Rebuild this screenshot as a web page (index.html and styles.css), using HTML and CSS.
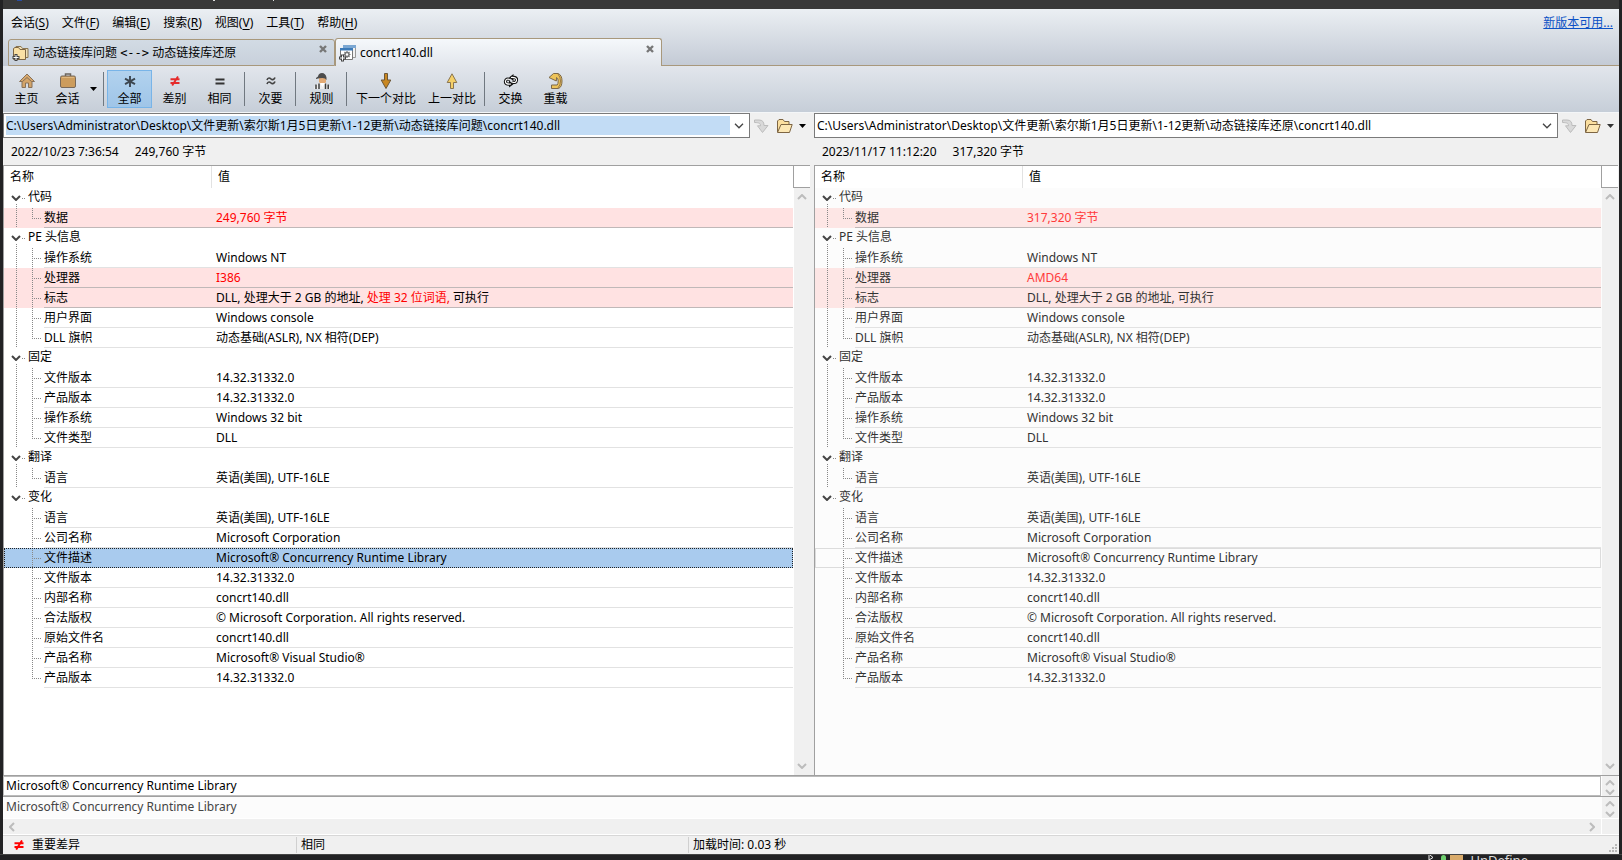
FILE: index.html
```html
<!DOCTYPE html>
<html lang="zh-CN">
<head>
<meta charset="utf-8">
<title>concrt140.dll</title>
<link rel="stylesheet" href="styles.css">
</head>
<body>
<svg class="defs" aria-hidden="true">
  <symbol id="chev" viewBox="0 0 10 6"><path d="M1 1l4 4 4-4" fill="none" stroke="currentColor" stroke-width="2"/></symbol>
  <symbol id="thin" viewBox="0 0 10 6"><path d="M1 .8l4 4 4-4" fill="none" stroke="currentColor" stroke-width="1.3"/></symbol>
  <symbol id="caret" viewBox="0 0 7 4"><path d="M0 0h7L3.500 4z" fill="currentColor"/></symbol>
  <symbol id="close" viewBox="0 0 8 8"><path d="M1 1l6 6M7 1L1 7" stroke="currentColor" stroke-width="2.400"/></symbol>
  <symbol id="noteq" viewBox="0 0 10 10"><path d="M.5 3.200h9M.5 7h9M8 .4L2.200 9.600" stroke="currentColor" stroke-width="1.900" fill="none"/></symbol>
  <symbol id="copy" viewBox="0 0 16 16"><path d="M1.500 2h4.500c3.500 0 5 2 5 5.500h4L9.500 14.500 4.500 7.800h3C7.500 5.500 6.500 4.600 1.500 4.500z" fill="#d9d9d9" stroke="#bcbcbc"/></symbol>
  <symbol id="open" viewBox="0 0 17 16"><path d="M1.500 14V3L3 1.500h4l1.500 2H13v3" fill="#fbdf9f" stroke="#7d6543"/><path d="M1.500 14.500L5 6.500h11.200l-2.700 8z" fill="#fce7b4" stroke="#7d6543"/></symbol>
</svg>

<div class="desktop">
  <div class="titlebar"><i class="frag blue"></i><i class="frag y"></i><i class="frag p"></i></div>
  <div class="window">
    <header class="top">
      <nav class="menu">
        <button>会话(<u>S</u>)</button><button>文件(<u>F</u>)</button><button>编辑(<u>E</u>)</button><button>搜索(<u>R</u>)</button><button>视图(<u>V</u>)</button><button>工具(<u>T</u>)</button><button>帮助(<u>H</u>)</button>
        <a class="update" href="#">新版本可用...</a>
      </nav>
      <div class="tabs" role="tablist">
        <div class="tab">
          <svg width="17" height="17" viewBox="0 0 17 17"><path d="M4 3V1.500h5l1.500 2H16v9h-3" fill="#eee0b8" stroke="#8a7550"/><path d="M1.500 14.500v-11L3 2.500h3.500l1.500 2h5.500v10z" fill="#fae0a4" stroke="#7d6543"/><path d="M4 9v7M.5 12.500h7" stroke="#444" stroke-width="3"/><path d="M4 10v5M1.500 12.500h5" stroke="#fff"/></svg>
          <button role="tab">动态链接库问题 <span class="arrow">&lt;--&gt;</span> 动态链接库还原</button>
          <button class="x" aria-label="关闭"><svg width="8" height="8"><use href="#close"/></svg></button>
        </div>
        <div class="tab active">
          <svg width="17" height="17" viewBox="0 0 17 17"><path d="M4.500.5h12v12h-12z" fill="#f2f2f2" stroke="#999"/><path d="M4 0h13v3H4z" fill="#7ba7d2"/><path d="M1.500 3.500h12v11h-12z" fill="#fff" stroke="#777"/><path d="M1 3h13v2.500H1z" fill="#3d7bb8"/><circle cx="8" cy="9.500" r="2" fill="none" stroke="#777" stroke-width="1.500"/><path d="M8 6v1.500M8 11.500V13M4.500 9.500H6M10 9.500h1.500M5.500 7l1 1M9.500 11l1 1M10.500 7l-1 1" stroke="#777" stroke-width="1.200"/><path d="M3.500 9.500v7M0 13h7" stroke="#444" stroke-width="3"/><path d="M3.500 10.500v5M1 13h5" stroke="#fff"/></svg>
          <button role="tab" aria-selected="true">concrt140.dll</button>
          <button class="x" aria-label="关闭"><svg width="8" height="8"><use href="#close"/></svg></button>
        </div>
        <div class="tabfill"></div>
      </div>
    </header>

    <div class="toolbar">
      <button class="tool"><svg width="16" height="16" viewBox="0 0 16 16"><path d="M3 8l5-5 5 5v6.500H9.500V10h-3v4.500H3z" fill="#d3a469" stroke="#877159"/><path d="M.5 8.500L8 1l7.500 7.500h-3L8 4.500 3.500 8.500z" fill="#d6a76c" stroke="#877159"/></svg>主页</button>
      <button class="tool narrow"><svg width="16" height="16" viewBox="0 0 16 16"><path d="M5.500 3V1h5v2" fill="none" stroke="#6c665e" stroke-width="1.500"/><rect x=".5" y="3" width="15" height="11.500" rx="1.500" fill="#cc9c5c" stroke="#77695a"/><path d="M2 4.500h12" stroke="#e0b87f"/></svg>会话</button>
      <button class="drop" aria-label="会话菜单"><svg width="7" height="4"><use href="#caret"/></svg></button>
      <span class="sep"></span>
      <button class="tool on"><svg width="16" height="16" viewBox="0 0 16 16"><path d="M8 3v11M3 5.700l10 5.500M13 5.700l-10 5.500" stroke="#3c4650" stroke-width="1.900"/></svg>全部</button>
      <button class="tool"><svg class="red" width="10" height="16"><use href="#noteq"/></svg>差别</button>
      <button class="tool"><svg width="16" height="16" viewBox="0 0 16 16"><path d="M3.500 6.500h9M3.500 10.500h9" stroke="#333" stroke-width="2"/></svg>相同</button>
      <span class="sep"></span>
      <button class="tool"><svg width="16" height="16" viewBox="0 0 16 16"><path d="M4 7c1-3 3-2 4-1s3 1 4-1.500M4 11c1-3 3-2 4-1s3 1 4-1.500" stroke="#444" stroke-width="1.700" fill="none"/></svg>次要</button>
      <span class="sep"></span>
      <button class="tool"><svg width="16" height="16" viewBox="0 0 16 16"><path d="M5 4h7v4.500Q11.500 11 8.500 11T5 8.500z" fill="#e3aa74"/><path d="M2 5q1-1 2-1.500Q4.500 0 8 0t4.500 4.500V7q-1-2-4-2T2 6z" fill="#4c4c4c"/><path d="M0 16q0-5 4.500-5.500h7Q16 11 16 16z" fill="#eee"/><path d="M2 11.500V16M5 10.500V16M11.500 10.500V16M14.200 11.500V16" stroke="#3c3c3c" stroke-width="1.500"/><path d="M6 10l2.500 4L11 10z" fill="#fff"/></svg>规则</button>
      <span class="sep"></span>
      <button class="tool w5"><svg width="16" height="16" viewBox="0 0 16 16"><path d="M6.500.5h3V7h3.300L8 15.500 3.200 7h3.300z" fill="#c98720" stroke="#6c5637"/></svg>下一个对比</button>
      <button class="tool w4"><svg width="16" height="16" viewBox="0 0 16 16"><path d="M6.500 15.500h3V9.500h3.300L8 .8 3.200 9.500h3.300z" fill="#f4cf68" stroke="#8a7550"/></svg>上一对比</button>
      <span class="sep"></span>
      <button class="tool"><svg width="16" height="16" viewBox="0 0 16 16"><g fill="none" stroke="#111" stroke-width="3.200"><path d="M7 6.500Q3 5 2.500 8.300T7 11"/><path d="M9 9Q13 10.500 13.500 7.300T10 4.500"/></g><path d="M6 7.500l4.500 3.700L6 14.500zM10.500 1L6 4.500 10.500 8z" fill="#111"/><g fill="none" stroke="#fff" stroke-width="1.200"><path d="M7 6.500Q3 5 2.500 8.300T8 11"/><path d="M9 9Q13 10.500 13.500 7.300T8 4.500"/></g></svg>交换</button>
      <button class="tool"><svg width="16" height="16" viewBox="0 0 16 16"><path d="M5.500.5H10q4 1.500 4 7.500t-3.500 7.500h-7v-3.500h5.700q1-1 1-4T8.500 4.500L8.300 8 1 4.500z" fill="#edc35a" stroke="#7d6848"/><path d="M10 1q2.500 3 2.500 7T10 15" fill="none" stroke="#9a7a45"/></svg>重载</button>
    </div>

    <main class="compare">
      <section class="side left">
        <div class="pathrow">
          <div class="combo"><input aria-label="左侧路径" value="C:\Users\Administrator\Desktop\文件更新\索尔斯1月5日更新\1-12更新\动态链接库问题\concrt140.dll"><button aria-label="历史"><svg width="10" height="6"><use href="#thin"/></svg></button></div>
          <button class="ib" aria-label="复制"><svg width="16" height="16"><use href="#copy"/></svg></button>
          <button class="ib" aria-label="打开"><svg width="17" height="16"><use href="#open"/></svg></button>
          <button class="ib" aria-label="打开菜单"><svg width="7" height="4"><use href="#caret"/></svg></button>
        </div>
        <div class="info"><span>2022/10/23 7:36:54</span><span>249,760 字节</span></div>
        <div class="pane">
          <div class="grid">
          <table>
            <thead><tr><th class="n">名称</th><th>值</th></tr></thead>
            <tbody>
              <tr class="group"><td class="n" colspan="2"><svg width="10" height="6"><use href="#chev"/></svg>代码</td></tr>
              <tr class="diff last"><td class="n"><span>数据</span></td><td><em>249,760 字节</em></td></tr>
              <tr class="group"><td class="n" colspan="2"><svg width="10" height="6"><use href="#chev"/></svg>PE 头信息</td></tr>
              <tr><td class="n"><span>操作系统</span></td><td>Windows NT</td></tr>
              <tr class="diff"><td class="n"><span>处理器</span></td><td><em>I386</em></td></tr>
              <tr class="diff"><td class="n"><span>标志</span></td><td>DLL, 处理大于 2 GB 的地址, <em>处理 32 位词语,</em> 可执行</td></tr>
              <tr><td class="n"><span>用户界面</span></td><td>Windows console</td></tr>
              <tr class="last"><td class="n"><span>DLL 旗帜</span></td><td>动态基础(ASLR), NX 相符(DEP)</td></tr>
              <tr class="group"><td class="n" colspan="2"><svg width="10" height="6"><use href="#chev"/></svg>固定</td></tr>
              <tr><td class="n"><span>文件版本</span></td><td>14.32.31332.0</td></tr>
              <tr><td class="n"><span>产品版本</span></td><td>14.32.31332.0</td></tr>
              <tr><td class="n"><span>操作系统</span></td><td>Windows 32 bit</td></tr>
              <tr class="last"><td class="n"><span>文件类型</span></td><td>DLL</td></tr>
              <tr class="group"><td class="n" colspan="2"><svg width="10" height="6"><use href="#chev"/></svg>翻译</td></tr>
              <tr class="last"><td class="n"><span>语言</span></td><td>英语(美国), UTF-16LE</td></tr>
            </tbody>
            <tbody class="end">
              <tr class="group"><td class="n" colspan="2"><svg width="10" height="6"><use href="#chev"/></svg>变化</td></tr>
              <tr><td class="n"><span>语言</span></td><td>英语(美国), UTF-16LE</td></tr>
              <tr><td class="n"><span>公司名称</span></td><td>Microsoft Corporation</td></tr>
              <tr class="sel"><td class="n"><span>文件描述</span></td><td>Microsoft® Concurrency Runtime Library</td></tr>
              <tr><td class="n"><span>文件版本</span></td><td>14.32.31332.0</td></tr>
              <tr><td class="n"><span>内部名称</span></td><td>concrt140.dll</td></tr>
              <tr><td class="n"><span>合法版权</span></td><td>© Microsoft Corporation. All rights reserved.</td></tr>
              <tr><td class="n"><span>原始文件名</span></td><td>concrt140.dll</td></tr>
              <tr><td class="n"><span>产品名称</span></td><td>Microsoft® Visual Studio®</td></tr>
              <tr class="last"><td class="n"><span>产品版本</span></td><td>14.32.31332.0</td></tr>
            </tbody>
          </table>
          </div>
          <div class="rail"><div class="corner"></div><div class="vbar"><svg class="up" width="10" height="6"><use href="#chev"/></svg><svg width="10" height="6"><use href="#chev"/></svg></div></div>
        </div>
      </section>

      <section class="side right">
        <div class="pathrow">
          <div class="combo"><input aria-label="右侧路径" value="C:\Users\Administrator\Desktop\文件更新\索尔斯1月5日更新\1-12更新\动态链接库还原\concrt140.dll"><button aria-label="历史"><svg width="10" height="6"><use href="#thin"/></svg></button></div>
          <button class="ib" aria-label="复制"><svg width="16" height="16"><use href="#copy"/></svg></button>
          <button class="ib" aria-label="打开"><svg width="17" height="16"><use href="#open"/></svg></button>
          <button class="ib" aria-label="打开菜单"><svg width="7" height="4"><use href="#caret"/></svg></button>
        </div>
        <div class="info"><span>2023/11/17 11:12:20</span><span>317,320 字节</span></div>
        <div class="pane">
          <div class="grid">
          <table>
            <thead><tr><th class="n">名称</th><th>值</th></tr></thead>
            <tbody>
              <tr class="group"><td class="n" colspan="2"><svg width="10" height="6"><use href="#chev"/></svg>代码</td></tr>
              <tr class="diff last"><td class="n"><span>数据</span></td><td><em>317,320 字节</em></td></tr>
              <tr class="group"><td class="n" colspan="2"><svg width="10" height="6"><use href="#chev"/></svg>PE 头信息</td></tr>
              <tr><td class="n"><span>操作系统</span></td><td>Windows NT</td></tr>
              <tr class="diff"><td class="n"><span>处理器</span></td><td><em>AMD64</em></td></tr>
              <tr class="diff"><td class="n"><span>标志</span></td><td>DLL, 处理大于 2 GB 的地址, 可执行</td></tr>
              <tr><td class="n"><span>用户界面</span></td><td>Windows console</td></tr>
              <tr class="last"><td class="n"><span>DLL 旗帜</span></td><td>动态基础(ASLR), NX 相符(DEP)</td></tr>
              <tr class="group"><td class="n" colspan="2"><svg width="10" height="6"><use href="#chev"/></svg>固定</td></tr>
              <tr><td class="n"><span>文件版本</span></td><td>14.32.31332.0</td></tr>
              <tr><td class="n"><span>产品版本</span></td><td>14.32.31332.0</td></tr>
              <tr><td class="n"><span>操作系统</span></td><td>Windows 32 bit</td></tr>
              <tr class="last"><td class="n"><span>文件类型</span></td><td>DLL</td></tr>
              <tr class="group"><td class="n" colspan="2"><svg width="10" height="6"><use href="#chev"/></svg>翻译</td></tr>
              <tr class="last"><td class="n"><span>语言</span></td><td>英语(美国), UTF-16LE</td></tr>
            </tbody>
            <tbody class="end">
              <tr class="group"><td class="n" colspan="2"><svg width="10" height="6"><use href="#chev"/></svg>变化</td></tr>
              <tr><td class="n"><span>语言</span></td><td>英语(美国), UTF-16LE</td></tr>
              <tr><td class="n"><span>公司名称</span></td><td>Microsoft Corporation</td></tr>
              <tr class="mate"><td class="n"><span>文件描述</span></td><td>Microsoft® Concurrency Runtime Library</td></tr>
              <tr><td class="n"><span>文件版本</span></td><td>14.32.31332.0</td></tr>
              <tr><td class="n"><span>内部名称</span></td><td>concrt140.dll</td></tr>
              <tr><td class="n"><span>合法版权</span></td><td>© Microsoft Corporation. All rights reserved.</td></tr>
              <tr><td class="n"><span>原始文件名</span></td><td>concrt140.dll</td></tr>
              <tr><td class="n"><span>产品名称</span></td><td>Microsoft® Visual Studio®</td></tr>
              <tr class="last"><td class="n"><span>产品版本</span></td><td>14.32.31332.0</td></tr>
            </tbody>
          </table>
          </div>
          <div class="rail"><div class="corner"></div><div class="vbar"><svg class="up" width="10" height="6"><use href="#chev"/></svg><svg width="10" height="6"><use href="#chev"/></svg></div></div>
        </div>
      </section>
    </main>

    <div class="details">
      <div class="line first"><div class="text">Microsoft® Concurrency Runtime Library</div><div class="vbar"><svg class="up" width="10" height="6"><use href="#chev"/></svg><svg width="10" height="6"><use href="#chev"/></svg></div></div>
      <div class="line second"><div class="text">Microsoft® Concurrency Runtime Library</div><div class="vbar"><svg class="up" width="10" height="6"><use href="#chev"/></svg><svg width="10" height="6"><use href="#chev"/></svg></div></div>
      <div class="hrow"><div class="hbar"><svg class="west" width="10" height="6"><use href="#chev"/></svg><svg class="east" width="10" height="6"><use href="#chev"/></svg></div><div class="hend"></div></div>
    </div>

    <footer class="status">
      <div class="s1"><svg width="10" height="10"><use href="#noteq"/></svg>重要差异</div>
      <div class="s2">相同</div>
      <div class="s3">加载时间: 0.03 秒</div>
      <svg class="grip" width="8" height="8" viewBox="0 0 8 8"><path d="M6 0h2v2H6zM3 3h2v2H3zM6 3h2v2H6zM0 6h2v2H0zM3 6h2v2H3zM6 6h2v2H6z" fill="#b8b8b8"/></svg>
    </footer>
  </div>
  <div class="behind"><svg width="6" height="6" viewBox="0 0 6 6"><path d="M1 0v5l4-2.500L2 0" fill="none" stroke="#eee"/></svg><i class="dot"></i><i class="box"></i><span>UnDefine</span></div>
</div>
</body>
</html>
```
FILE: styles.css
```css
* { box-sizing: border-box; }
body {
  margin: 0;
  font: 12px/16px "Noto Sans", "Noto Sans CJK SC", sans-serif;
  color: #000;
  background: #222224;
}
button, input { font: inherit; color: inherit; margin: 0; padding: 0; border: 0; background: none; }
svg { display: block; flex: none; }
em { font-style: normal; color: #f00; }
.defs { position: absolute; width: 0; height: 0; }

.desktop { height: 100vh; display: flex; flex-direction: column; overflow: hidden; }
.titlebar { height: 9px; flex: none; margin: 0 3px; background: #393939; display: flex; padding-left: 14px; }
.frag { height: 1px; background: #ddd; }
.frag.blue { width: 5px; background: #2a4da0; }
.frag.y { width: 2px; margin-left: 191px; }
.frag.p { width: 1px; margin-left: 58px; }
.window { flex: 1; min-height: 0; margin: 0 3px; display: flex; flex-direction: column; background: #f0f0f0; }

.top { background: linear-gradient(#ebeff3, #c3cad5); }
.menu { display: flex; align-items: center; height: 29px; gap: 13px; padding: 0 6px 2px 8px; }
.menu u { text-underline-offset: 2px; }
.update { margin-left: auto; color: #0b51c5; }
.tabs { display: flex; height: 28px; }
.tab {
  width: 327px; height: 27px; margin-top: 1px; padding: 1px 7px 0 3px;
  display: flex; align-items: center; gap: 4px;
  border: 1px solid #a8987c; border-radius: 3px 3px 0 0;
  background: linear-gradient(#d2dbe4, #c8d0db);
}
.tab:first-child { margin-left: 5px; }
.tab.active { height: 28px; margin-top: 0; border-bottom: 0; background: linear-gradient(#f5f8fb, #e2e6ec); }
.x { margin: 0 0 8px auto; color: #777; }
.arrow { font-family: "DejaVu Sans Mono", monospace; }
.tabfill { flex: 1; border-bottom: 1px solid #a8987c; }

.toolbar {
  height: 47px; flex: none; display: flex; align-items: center; padding: 0 1px;
  background: linear-gradient(#e2e6ec, #c6ced8); border-bottom: 1px solid #f4f6f8;
}
.tool {
  width: 45px; height: 38px; display: flex; flex-direction: column; align-items: center;
  gap: 2px; padding-top: 2px; white-space: nowrap; border: 1px solid transparent;
}
.tool.narrow { width: 37px; }
.tool.w5 { width: 72px; }
.tool.w4 { width: 60px; }
.tool.on { background: linear-gradient(#b2d2ee, #9fc5e8); border-color: #78b4e8; }
.drop { width: 15px; display: flex; justify-content: center; }
.sep { width: 1px; height: 34px; margin: 0 3px 0 2px; background: #707880; }
.red { color: #e52b2b; }

.compare { flex: 1; min-height: 0; display: flex; gap: 3px; }
.side { display: flex; flex-direction: column; min-width: 0; }
.left { width: 50%; flex: none; }
.right { flex: 1; color: #333; }
.right em { color: #ff3b3b; }
.pathrow { display: flex; align-items: center; height: 25px; gap: 6px; padding-right: 5px; }
.combo { flex: 1; min-width: 0; height: 25px; display: flex; border: 1px solid #7a7a7a; background: #fff; padding: 2px; color: #000; }
.combo input { flex: 1; min-width: 0; outline: 0; }
.left .combo input { background: #c2dcf5; }
.combo button { width: 17px; display: flex; align-items: center; justify-content: center; color: #444; }
.ib:nth-of-type(1) { margin-left: -3px; }
.ib:nth-of-type(2) { margin-left: 1px; }
.info { height: 27px; display: flex; align-items: center; gap: 16px; padding-left: 8px; color: #000; }
.pane { flex: 1; min-height: 0; display: flex; border: 1px solid #a0a0a0; border-width: 1px 0 0 1px; background: #fff; margin-right: 1px; }
.right .pane { background: #fcfcfc; }
.grid { flex: 1; min-width: 0; }
table { width: 100%; border-collapse: separate; border-spacing: 0; table-layout: fixed; }
th { height: 22px; padding: 0 0 0 6px; font-weight: 400; text-align: left; background: #fff; color: #000; }
th.n { width: 208px; border-right: 1px solid #e2e2e2; }
td { height: 20px; padding: 0 0 0 4px; line-height: 19px; border-bottom: 1px solid #e2e2e2; white-space: nowrap; }
td.n {
  padding: 0 0 0 40px; border-bottom: 0;
  background:
    repeating-linear-gradient(#888 0 1px, transparent 1px 2px) 12px 0 / 1px 20px no-repeat,
    repeating-linear-gradient(#888 0 1px, transparent 1px 2px) 28px 0 / 1px 20px no-repeat,
    repeating-linear-gradient(90deg, #888 0 1px, transparent 1px 2px) 30px 10px / 8px 1px no-repeat;
}
td.n span { display: block; border-bottom: 1px solid #e2e2e2; }
.last td.n { background-size: 1px 20px, 1px 11px, 8px 1px; }
.end td.n { background-size: 0 0, 1px 20px, 8px 1px; }
.end .last td.n { background-size: 0 0, 1px 11px, 8px 1px; }
.group td.n, .end .group td.n {
  padding-left: 24px; line-height: 18px; vertical-align: top;
  background:
    repeating-linear-gradient(#888 0 1px, transparent 1px 2px) 12px 16px / 1px 4px no-repeat,
    repeating-linear-gradient(90deg, #888 0 1px, transparent 1px 2px) 18px 10px / 4px 1px no-repeat;
}
.end .group td.n { background-size: 0 0, 4px 1px; }
.group svg { float: left; margin: 7px 0 0 -17px; color: #444; }
.diff { background: #ffe2e2; }
.right .diff { background: #fde6e5; }
.diff td, .diff td.n span { border-color: #c0b8b8; }
.sel { background: #a9cbee; outline: 1px dotted #222; outline-offset: -1px; }
.sel td, .sel td.n span, .mate td, .mate td.n span { border-color: transparent; }
.mate { outline: 1px solid #dcdcdc; outline-offset: -1px; }
.rail { width: 17px; flex: none; display: flex; flex-direction: column; }
.corner { height: 22px; background: #fff; border: 1px solid #a0a0a0; border-width: 0 0 1px 1px; }
.vbar {
  flex: 1; margin-left: 1px; background: #f0f0f0; color: #bcbcbc;
  display: flex; flex-direction: column; align-items: center; justify-content: space-between; padding: 6px 0;
}
.up { transform: rotate(180deg); }

.details { flex: none; border-top: 1px solid #a0a0a0; }
.line { display: flex; height: 20px; background: #fff; }
.line .text { flex: 1; padding-left: 2px; line-height: 18px; border: 1px solid #bbb; }
.line .vbar { width: 16px; flex: none; padding: 4px 0 1px; margin: 0 1px 0 1px; }
.line.second { height: 22px; border-top: 1px solid #a0a0a0; background: #fcfcfc; color: #444; }
.second .text { border-color: transparent; }
.hrow { display: flex; height: 17px; border: 1px solid #fff; border-width: 1px 0; }
.hbar { flex: 1; display: flex; align-items: center; justify-content: space-between; padding: 0 4px; color: #bcbcbc; }
.west { transform: rotate(90deg); }
.east { transform: rotate(-90deg); }
.hend { width: 18px; border-left: 1px solid #fff; }

.status { height: 19px; flex: none; display: flex; align-items: center; border-top: 1px solid #d7d7d7; padding-right: 2px; }
.status div { padding-left: 4px; border-right: 1px solid #d0d0d0; }
.status .s1 { width: 294px; display: flex; align-items: center; gap: 8px; padding-left: 11px; }
.s1 svg { color: #f00; }
.status .s2 { width: 392px; }
.status .s3 { border: 0; }
.grip { margin: 6px 0 0 auto; }

.behind { height: 6px; flex: none; overflow: hidden; display: flex; align-items: flex-start; gap: 4px; padding-right: 94px; justify-content: flex-end; color: #ddd; border-top: 1px solid #444; }
.behind span { font-size: 13px; line-height: 10px; }
.behind svg { margin-right: 3px; }
.dot { width: 5px; height: 5px; border-radius: 3px 3px 0 0; background: #6fd06f; }
.box { width: 13px; height: 6px; background: #d9ab6b; margin-right: 3px; }
```
